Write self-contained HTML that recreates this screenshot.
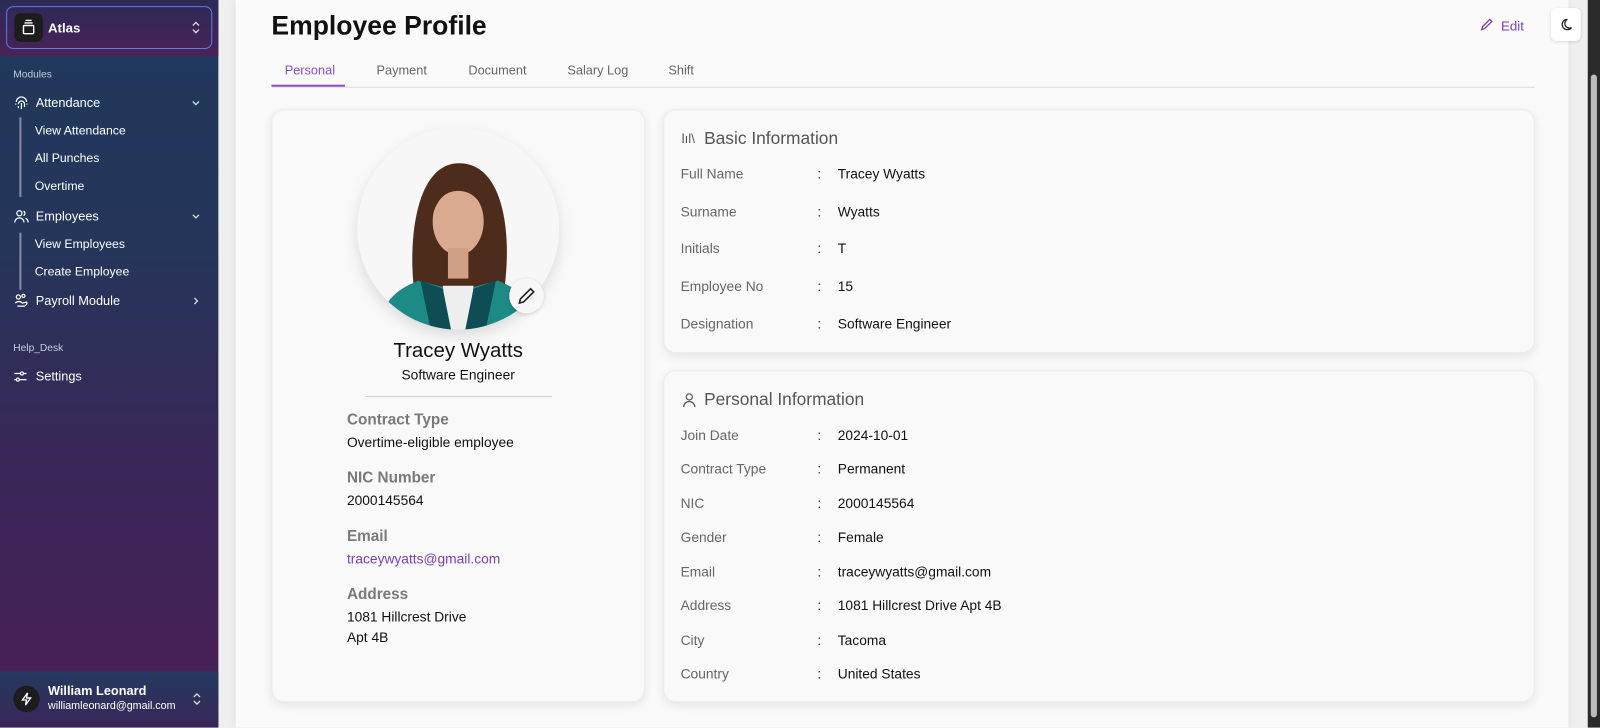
<!DOCTYPE html>
<html><head><meta charset="utf-8">
<style>
*{box-sizing:border-box;margin:0;padding:0}
body{width:1600px;height:727px;overflow:hidden;font-family:"Liberation Sans",Arial,sans-serif;background:#efefef;position:relative}
#w{position:absolute;left:0;top:0;width:1568px;height:713px;transform:scale(1.020408);transform-origin:0 0}
.sb{position:absolute;left:0;top:0;width:214px;height:713px;background:linear-gradient(180deg,#1e3a5c 0%,#26355a 35%,#3a2658 65%,#4a1f56 100%);color:#fff}
.sbtop{position:absolute;left:0;top:0;width:214px;height:55px;background:linear-gradient(180deg,#2b2a55,#4a2258)}
.org{position:absolute;left:6px;top:6px;width:202px;height:42px;border:1.5px solid #5a7ee0;border-radius:7px}
.org .ic{position:absolute;left:7px;top:6px;width:28px;height:28px;border-radius:6px;background:#1c1c1c}
.org b{position:absolute;left:40px;top:13px;font-size:13px}
.sec{position:absolute;left:13px;font-size:10px;color:#c9c9d8}
.it{position:absolute;left:35px;font-size:12.5px;color:#fff}
.sub{position:absolute;left:34px;font-size:12px;color:#fff}
.vl{position:absolute;left:19px;width:1.5px;background:#8a8aa8}
.chev{position:absolute;left:187px}
.foot{position:absolute;left:0;top:658px;width:214px;height:55px;background:linear-gradient(180deg,#233a5e,#3a2658)}
.panel{position:absolute;left:231px;top:0;width:1306px;height:713px;background:#fafafa;box-shadow:0 0 8px rgba(0,0,0,.06)}
h1{position:absolute;left:266px;top:10px;font-size:26px;font-weight:bold;color:#111}
.tabs{position:absolute;left:266px;top:85px;width:1238px;height:1px;background:#ddd}
.tab{position:absolute;top:62px;font-size:12.5px;color:#666}
.card{position:absolute;background:#f9f9f9;border:1px solid #ececec;border-radius:12px;box-shadow:0 3px 10px rgba(0,0,0,.09)}
.lab{position:absolute;left:340px;font-size:15px;font-weight:bold;color:#7a7a7a}
.val{position:absolute;left:340px;font-size:13.5px;color:#111}
.r{position:absolute;font-size:13.5px}
.r .a{position:absolute;left:0;color:#666;white-space:nowrap}
.r .c{position:absolute;left:134px;color:#333}
.r .v{position:absolute;left:154px;color:#111;white-space:nowrap}
.hd{position:absolute;font-size:17px;color:#555}
</style></head><body>
<div id="w">
<div class="sb">
 <div class="sbtop"></div>
 <div class="org"><div class="ic"><svg width="28" height="28" viewBox="0 0 28 28" fill="none" stroke="#fff" stroke-width="1.4"><rect x="9" y="12" width="10" height="8" rx="1"/><path d="M10 9.5h8M11 7h6"/></svg></div><b>Atlas</b><svg style="position:absolute;left:180px;top:13px" width="10" height="14" viewBox="0 0 10 14" fill="none" stroke="#ddd" stroke-width="1.3"><path d="M2 5l3-3 3 3M2 9l3 3 3-3"/></svg></div>
 <div class="sec" style="top:68px">Modules</div>
 <svg style="position:absolute;left:13px;top:93px" width="16" height="16" viewBox="0 0 16 16" fill="none" stroke="#fff" stroke-width="1.2"><path d="M3 7a5 5 0 0 1 10 0M5 9a3 3 0 0 1 6 0v3M8 8v6M5 11v2M2 9h1M13 9h1"/></svg>
 <div class="it" style="top:94px">Attendance</div><svg class="chev" style="top:96px" width="10" height="10" viewBox="0 0 10 10" fill="none" stroke="#ddd" stroke-width="1.3"><path d="M2 3.5l3 3 3-3"/></svg>
 <div class="vl" style="top:115px;height:78px"></div>
 <div class="sub" style="top:121px">View Attendance</div>
 <div class="sub" style="top:148px">All Punches</div>
 <div class="sub" style="top:175px">Overtime</div>
 <svg style="position:absolute;left:13px;top:204px" width="16" height="16" viewBox="0 0 16 16" fill="none" stroke="#fff" stroke-width="1.2"><circle cx="6" cy="5" r="2.5"/><path d="M1.5 14a4.5 4.5 0 0 1 9 0M10 2.8a2.5 2.5 0 0 1 0 4.5M12 10a4 4 0 0 1 2.5 4"/></svg>
 <div class="it" style="top:205px">Employees</div><svg class="chev" style="top:207px" width="10" height="10" viewBox="0 0 10 10" fill="none" stroke="#ddd" stroke-width="1.3"><path d="M2 3.5l3 3 3-3"/></svg>
 <div class="vl" style="top:228px;height:56px"></div>
 <div class="sub" style="top:232px">View Employees</div>
 <div class="sub" style="top:259px">Create Employee</div>
 <svg style="position:absolute;left:13px;top:287px" width="16" height="16" viewBox="0 0 16 16" fill="none" stroke="#fff" stroke-width="1.2"><circle cx="5" cy="4" r="2"/><circle cx="10" cy="3" r="1.5"/><path d="M2 10c2-2 5-2 7 0l4-1c1 1 0 3-2 4H4"/></svg>
 <div class="it" style="top:288px">Payroll Module</div><svg class="chev" style="top:290px" width="10" height="10" viewBox="0 0 10 10" fill="none" stroke="#ddd" stroke-width="1.3"><path d="M3.5 2l3 3-3 3"/></svg>
 <div class="sec" style="top:336px">Help_Desk</div>
 <svg style="position:absolute;left:13px;top:362px" width="14" height="14" viewBox="0 0 14 14" fill="none" stroke="#fff" stroke-width="1.2"><path d="M1 4h6M10 4h3M1 10h2M6 10h7"/><circle cx="8.5" cy="4" r="1.5"/><circle cx="4.5" cy="10" r="1.5"/></svg>
 <div class="it" style="top:362px">Settings</div>
 <div class="foot">
  <div style="position:absolute;left:13px;top:14px;width:26px;height:26px;border-radius:50%;background:#1c1c1c"><svg width="26" height="26" viewBox="0 0 26 26" fill="none" stroke="#fff" stroke-width="1.3"><path d="M14 7l-5 7h4l-1 5 5-7h-4z"/></svg></div>
  <b style="position:absolute;left:47px;top:12px;font-size:12.5px">William Leonard</b>
  <div style="position:absolute;left:47px;top:28px;font-size:10.5px">williamleonard@gmail.com</div>
  <svg style="position:absolute;left:188px;top:20px" width="10" height="14" viewBox="0 0 10 14" fill="none" stroke="#ddd" stroke-width="1.3"><path d="M2 5l3-3 3 3M2 9l3 3 3-3"/></svg>
 </div>
</div>
<div class="panel"></div>
<div style="position:absolute;left:1556px;top:0;width:12px;height:713px;background:#2a2a2a"><div style="position:absolute;left:3px;top:73px;width:6px;height:630px;border-radius:3px;background:#bbb"></div></div>
<h1>Employee Profile</h1>
<svg style="position:absolute;left:1450px;top:17px" width="14" height="14" viewBox="0 0 14 14" fill="none" stroke="#7b3fb0" stroke-width="1.3"><path d="M2 12l1-3 7-7 2 2-7 7z"/></svg>
<div style="position:absolute;left:1471px;top:18px;font-size:13px;color:#7b3fb0">Edit</div>
<div style="position:absolute;left:1520px;top:8px;width:29px;height:32px;background:#fff;border-radius:5px;box-shadow:0 1px 3px rgba(0,0,0,.12)"><svg width="29" height="32" viewBox="0 0 29 32" fill="none" stroke="#222" stroke-width="1.3"><path d="M16 11a5 5 0 1 0 4 8 4 4 0 0 1-4-8z"/></svg></div>
<div class="tabs"></div>
<div style="position:absolute;left:266px;top:83px;width:72px;height:2px;background:#8e4ec6"></div>
<div class="tab" style="left:279px;color:#8e4ec6">Personal</div>
<div class="tab" style="left:369px">Payment</div>
<div class="tab" style="left:459px">Document</div>
<div class="tab" style="left:556px">Salary Log</div>
<div class="tab" style="left:655px">Shift</div>

<div class="card" style="left:266px;top:107px;width:366px;height:581px"></div>
<div style="position:absolute;left:350px;top:125px;width:198px;height:198px;border-radius:50%;background:#f7f7f7;box-shadow:0 6px 14px rgba(0,0,0,.12);overflow:hidden">
<svg width="198" height="198" viewBox="0 0 198 198">
<path d="M56 160c-6-45 0-125 44-125s52 70 44 125z" fill="#4e2c1c"/>
<ellipse cx="99" cy="92" rx="25" ry="33" fill="#d9a990"/>
<path d="M72 92c-1-30 12-44 28-44 20 0 30 18 27 44-4-20-14-30-28-30s-22 10-27 30z" fill="#4e2c1c"/>
<rect x="89" y="118" width="20" height="30" fill="#cf9f86"/>
<path d="M20 198c6-28 16-38 40-48l39 10 39-10c24 10 34 20 40 48z" fill="#1d8a86"/>
<path d="M84 155h30l-4 43h-22z" fill="#eee"/>
<path d="M62 150l22 8 8 40h-20zM136 150l-22 8-8 40h20z" fill="#0f4d55"/>
</svg></div>
<div style="position:absolute;left:499px;top:273px;width:34px;height:34px;border-radius:50%;background:#f7f7f7;box-shadow:0 1px 4px rgba(0,0,0,.15)"><svg width="34" height="34" viewBox="0 0 34 34" fill="none" stroke="#222" stroke-width="1.6"><path d="M10 24l1-4 10-10 3 3-10 10z"/></svg></div>
<div style="position:absolute;left:266px;width:366px;top:333px;text-align:center;font-size:20px;color:#111">Tracey Wyatts</div>
<div style="position:absolute;left:266px;width:366px;top:360px;text-align:center;font-size:13.5px;color:#111">Software Engineer</div>
<div style="position:absolute;left:358px;top:388px;width:183px;height:1px;background:#ccc"></div>
<div class="lab" style="top:403px">Contract Type</div><div class="val" style="top:426px">Overtime-eligible employee</div>
<div class="lab" style="top:460px">NIC Number</div><div class="val" style="top:483px">2000145564</div>
<div class="lab" style="top:517px">Email</div><div class="val" style="top:540px;color:#7b3fb0">traceywyatts@gmail.com</div>
<div class="lab" style="top:574px">Address</div><div class="val" style="top:597px">1081 Hillcrest Drive</div><div class="val" style="top:617px">Apt 4B</div>

<div class="card" style="left:650px;top:107px;width:854px;height:239px"></div>
<div style="position:absolute;left:668px;top:128px;font-size:13px;color:#555">lıl\</div>
<div class="hd" style="left:690px;top:126px">Basic Information</div>
<div class="r" style="left:667px;top:163px"><span class="a">Full Name</span><span class="c">:</span><span class="v">Tracey Wyatts</span></div>
<div class="r" style="left:667px;top:200px"><span class="a">Surname</span><span class="c">:</span><span class="v">Wyatts</span></div>
<div class="r" style="left:667px;top:236px"><span class="a">Initials</span><span class="c">:</span><span class="v">T</span></div>
<div class="r" style="left:667px;top:273px"><span class="a">Employee No</span><span class="c">:</span><span class="v">15</span></div>
<div class="r" style="left:667px;top:310px"><span class="a">Designation</span><span class="c">:</span><span class="v">Software Engineer</span></div>

<div class="card" style="left:650px;top:363px;width:854px;height:325px"></div>
<svg style="position:absolute;left:668px;top:384px" width="15" height="16" viewBox="0 0 15 16" fill="none" stroke="#555" stroke-width="1.2"><circle cx="7.5" cy="5" r="3"/><path d="M2 15a5.5 5.5 0 0 1 11 0"/></svg>
<div class="hd" style="left:690px;top:382px">Personal Information</div>
<div class="r" style="left:667px;top:419px"><span class="a">Join Date</span><span class="c">:</span><span class="v">2024-10-01</span></div>
<div class="r" style="left:667px;top:452px"><span class="a">Contract Type</span><span class="c">:</span><span class="v">Permanent</span></div>
<div class="r" style="left:667px;top:486px"><span class="a">NIC</span><span class="c">:</span><span class="v">2000145564</span></div>
<div class="r" style="left:667px;top:519px"><span class="a">Gender</span><span class="c">:</span><span class="v">Female</span></div>
<div class="r" style="left:667px;top:553px"><span class="a">Email</span><span class="c">:</span><span class="v">traceywyatts@gmail.com</span></div>
<div class="r" style="left:667px;top:586px"><span class="a">Address</span><span class="c">:</span><span class="v">1081 Hillcrest Drive Apt 4B</span></div>
<div class="r" style="left:667px;top:620px"><span class="a">City</span><span class="c">:</span><span class="v">Tacoma</span></div>
<div class="r" style="left:667px;top:653px"><span class="a">Country</span><span class="c">:</span><span class="v">United States</span></div>
</div>
</body></html>
